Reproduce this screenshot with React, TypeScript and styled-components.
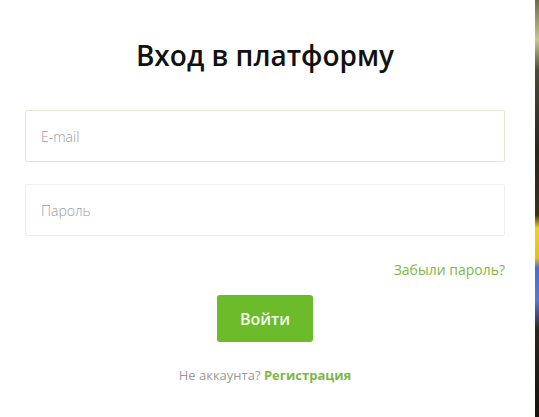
import React from 'react';
import styled, { createGlobalStyle } from 'styled-components';

const GlobalStyle = createGlobalStyle`
  html, body {
    margin: 0;
    padding: 0;
    height: 100%;
  }
  body {
    font-family: 'Open Sans', 'Noto Sans', sans-serif;
    background: #1c1610;
  }
  #root {
    height: 100%;
  }
`;

const Page = styled.div`
  display: flex;
  height: 417px;
  overflow: hidden;
`;

const Panel = styled.div`
  width: 535px;
  flex-shrink: 0;
  background: #ffffff;
  box-sizing: border-box;
  padding: 34px 30px 0 25px;
  display: flex;
  flex-direction: column;
`;

const Backdrop = styled.div`
  flex: 1;
  background: linear-gradient(
    180deg,
    #6d6a4a 0px,
    #c9c88a 40px,
    #4e4a36 70px,
    #2a2519 150px,
    #3a3018 215px,
    #f0d21a 228px,
    #e8c010 258px,
    #4a6ad8 268px,
    #5a78d0 300px,
    #2a241c 330px,
    #17120c 417px
  );
`;

const Title = styled.h1`
  margin: 0 0 34px;
  text-align: center;
  font-size: 28px;
  line-height: 42px;
  font-weight: 600;
  color: #111111;
`;

const Form = styled.form`
  display: flex;
  flex-direction: column;
`;

const Field = styled.input<{ $active?: boolean }>`
  box-sizing: border-box;
  width: 100%;
  height: 52px;
  margin-bottom: 22px;
  padding: 0 15px;
  border: 1px solid ${({ $active }) => ($active ? '#e4e6d2' : '#efefef')};
  border-radius: 2px;
  font-family: inherit;
  font-size: 14px;
  font-weight: 300;
  color: #333;
  background: #fff;
  outline: none;

  &::placeholder {
    color: #9a9a9a;
  }
`;

const ForgotRow = styled.div`
  display: flex;
  justify-content: flex-end;
  margin-top: 2px;
  margin-bottom: 15px;
`;

const Link = styled.a<{ $bold?: boolean }>`
  color: #7cb748;
  font-size: ${({ $bold }) => ($bold ? '13px' : '14px')};
  font-weight: ${({ $bold }) => ($bold ? 700 : 400)};
  line-height: 20px;
  text-decoration: none;
`;

const SubmitRow = styled.div`
  display: flex;
  justify-content: center;
`;

const SubmitButton = styled.button`
  width: 96px;
  height: 47px;
  border: none;
  border-radius: 3px;
  background: #6cbb2b;
  color: #f4fbef;
  font-family: inherit;
  font-size: 16px;
  font-weight: 600;
  cursor: pointer;
`;

const Footer = styled.p`
  margin: 23px 0 0;
  text-align: center;
  font-size: 13px;
  line-height: 20px;
  color: #999999;
`;

const App: React.FC = () => (
  <>
    <GlobalStyle />
    <Page>
      <Panel>
        <Title>Вход в платформу</Title>
        <Form onSubmit={(e) => e.preventDefault()}>
          <Field type="email" placeholder="E-mail" $active />
          <Field type="password" placeholder="Пароль" />
          <ForgotRow>
            <Link href="#">Забыли пароль?</Link>
          </ForgotRow>
          <SubmitRow>
            <SubmitButton type="submit">Войти</SubmitButton>
          </SubmitRow>
        </Form>
        <Footer>
          Не аккаунта? <Link href="#" $bold>Регистрация</Link>
        </Footer>
      </Panel>
      <Backdrop />
    </Page>
  </>
);

export default App;
